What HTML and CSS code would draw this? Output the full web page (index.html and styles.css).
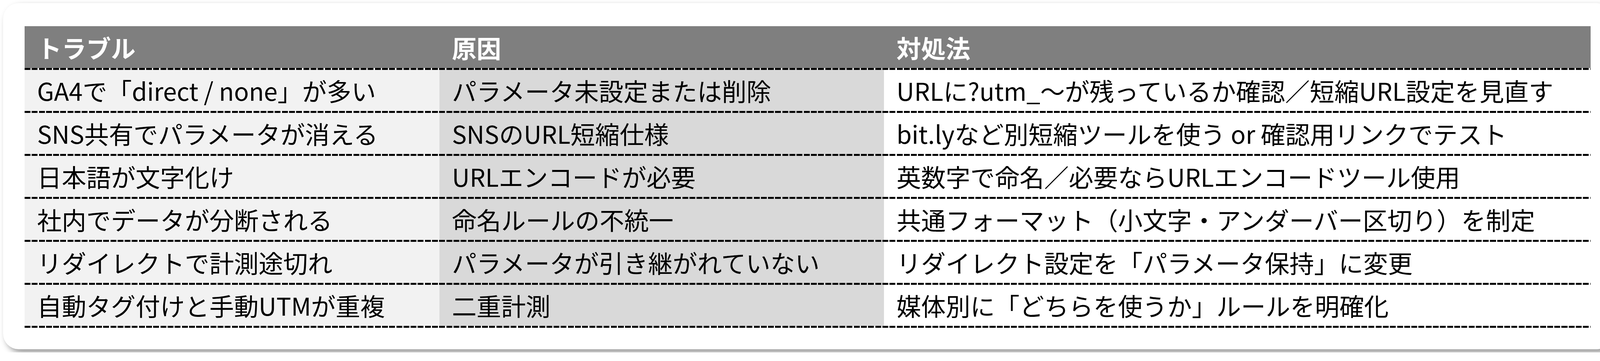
FILE: index.html
```html
<!DOCTYPE html>
<html lang="ja">
<head>
<meta charset="utf-8">
<title>UTMトラブル対処表</title>
<link rel="stylesheet" href="styles.css">
</head>
<body>
<div class="card">
  <div class="table">
    <div class="row head">
      <div class="cell">トラブル</div>
      <div class="cell">原因</div>
      <div class="cell">対処法</div>
    </div>
    <div class="row">
      <div class="cell c1">GA4で「direct / none」が多い</div>
      <div class="cell c2">パラメータ未設定または削除</div>
      <div class="cell c3">URLに?utm_〜が残っているか確認／短縮URL設定を見直す</div>
    </div>
    <div class="row">
      <div class="cell c1">SNS共有でパラメータが消える</div>
      <div class="cell c2">SNSのURL短縮仕様</div>
      <div class="cell c3">bit.lyなど別短縮ツールを使う or 確認用リンクでテスト</div>
    </div>
    <div class="row">
      <div class="cell c1">日本語が文字化け</div>
      <div class="cell c2">URLエンコードが必要</div>
      <div class="cell c3">英数字で命名／必要ならURLエンコードツール使用</div>
    </div>
    <div class="row">
      <div class="cell c1">社内でデータが分断される</div>
      <div class="cell c2">命名ルールの不統一</div>
      <div class="cell c3">共通フォーマット（小文字・アンダーバー区切り）を制定</div>
    </div>
    <div class="row">
      <div class="cell c1">リダイレクトで計測途切れ</div>
      <div class="cell c2">パラメータが引き継がれていない</div>
      <div class="cell c3">リダイレクト設定を「パラメータ保持」に変更</div>
    </div>
    <div class="row">
      <div class="cell c1">自動タグ付けと手動UTMが重複</div>
      <div class="cell c2">二重計測</div>
      <div class="cell c3">媒体別に「どちらを使うか」ルールを明確化</div>
    </div>
  </div>
</div>
</body>
</html>
```

FILE: styles.css
```css
html, body {
  margin: 0;
  padding: 0;
  background: #ffffff;
}

body {
  padding: 8px;
  font-family: "Noto Sans CJK JP", "Noto Sans", sans-serif;
}

.card {
  width: 4119px;
  height: 886px;
  box-sizing: border-box;
  padding: 59px 55px 55px 55px;
  background: #ffffff;
  border-radius: 40px;
  box-shadow: 8px 8px 16px rgba(0, 0, 0, 0.42);
}

.table {
  display: flex;
  flex-direction: column;
}

.table::after {
  content: "";
  display: block;
  height: 5px;
  background: repeating-linear-gradient(90deg, #000 0 15px, transparent 15px 18.3px);
}

.row {
  display: grid;
  grid-template-columns: 1062px 1138px 1fr;
  height: 110px;
  position: relative;
}

.row::before {
  content: "";
  position: absolute;
  left: 0;
  right: 0;
  top: 0;
  height: 5px;
  background: repeating-linear-gradient(90deg, #000 0 15px, transparent 15px 18.3px);
}

.row.head {
  height: 107px;
  background: #7f7f7f;
}

.row.head::before {
  display: none;
}

.cell {
  display: flex;
  align-items: center;
  padding: 0 0 0 32px;
  font-size: 63px;
  color: #000000;
  white-space: nowrap;
}

.head .cell {
  color: #ffffff;
  font-weight: 700;
}

.row:not(.head) .cell {
  padding-top: 3px;
}

.c1 { background: #f2f2f2; }
.c2 { background: #d9d9d9; }
.c3 { background: #ffffff; }
```
